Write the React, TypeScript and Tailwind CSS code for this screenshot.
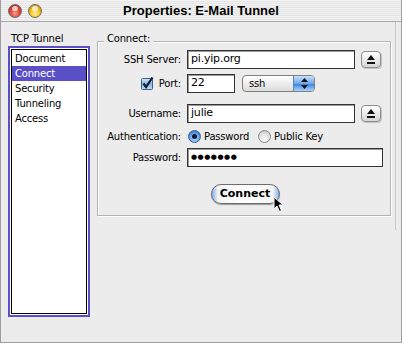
import React from "react";

const listItems = ["Document", "Connect", "Security", "Tunneling", "Access"];

function TrafficLight({ color }: { color: "red" | "yellow" }) {
  const bg =
    color === "red"
      ? "bg-[radial-gradient(circle_at_50%_70%,#ff9a8a_0%,#e0463a_45%,#a81c14_100%)]"
      : "bg-[radial-gradient(circle_at_50%_70%,#fff3a0_0%,#f7c21c_45%,#c57a06_100%)]";
  return (
    <div className={`relative h-[14px] w-[14px] rounded-full border border-[#6b6b6b] ${bg}`}>
      <div className="absolute left-[3px] top-[1px] h-[5px] w-[6px] rounded-full bg-white/70" />
    </div>
  );
}

function EjectButton() {
  return (
    <div className="flex h-[17px] w-[20px] items-center justify-center rounded-[4px] border border-[#8d8d8d] bg-gradient-to-b from-white to-[#d6d6d6] shadow-[1px_1px_0_#c4c4c4]">
      <svg width="8" height="9" viewBox="0 0 8 9">
        <path d="M4 0 L8 5 L0 5 Z" fill="#111" />
        <rect x="0" y="7" width="8" height="2" fill="#111" />
      </svg>
    </div>
  );
}

function Field({ value, width, dots }: { value: string; width: string; dots?: boolean }) {
  return (
    <div
      className={`flex h-[19px] items-center border border-[#333] bg-white pl-[3px] shadow-[inset_1px_1px_0_#9a9a9a] ${width} ${
        dots ? "text-[7px] tracking-[0.5px]" : "text-[11px] tracking-[-0.2px]"
      }`}
    >
      {value}
    </div>
  );
}

export default function App() {
  return (
    <div className="h-[344px] w-[402px] bg-white font-['DejaVu_Sans',sans-serif] text-[10px] tracking-[-0.2px] text-black">
      <div className="relative flex h-[343px] w-[402px] flex-col border-x border-b border-[#9d9d9d] bg-[#ececec]">
        {/* Title bar */}
        <div className="relative flex h-[22px] shrink-0 items-center justify-center border-b border-[#a6a6a6] bg-[repeating-linear-gradient(to_bottom,#f4f4f4_0px,#f4f4f4_1px,#e4e4e4_1px,#e4e4e4_2px)]">
          <div className="absolute left-[7px] top-[4px] flex gap-[6px]">
            <TrafficLight color="red" />
            <TrafficLight color="yellow" />
          </div>
          <span className="font-['Liberation_Sans',sans-serif] text-[13px] font-bold tracking-normal">
            Properties: E-Mail Tunnel
          </span>
        </div>

        <div className="absolute right-[5px] top-[22px] h-[208px] w-px bg-[#c9c9c9]" />

        {/* Body */}
        <div className="flex flex-1 gap-[7px] pl-[7px] pt-[9px]">
          {/* Left list */}
          <div className="flex w-[82px] flex-col">
            <div className="h-[15px] pl-[3px] leading-[15px]">TCP Tunnel</div>
            <div className="h-[271px] border-2 border-[#5a4fc7] bg-white p-px">
              <div className="h-full border border-black bg-white pt-[1px]">
                {listItems.map((item) => (
                  <div
                    key={item}
                    className={`h-[15px] pl-[3px] leading-[15px] ${
                      item === "Connect" ? "bg-[#5a4fc7] text-white" : ""
                    }`}
                  >
                    {item}
                  </div>
                ))}
              </div>
            </div>
          </div>

          {/* Connect group */}
          <div className="relative mt-[10px] h-[175px] w-[294px] border border-[#b3b3b3] shadow-[inset_1px_1px_0_#fff,1px_1px_0_#fff]">
            <div className="absolute left-[6px] top-[-10px] bg-[#ececec] px-[3px] leading-[14px]">
              Connect:
            </div>

            <div className="flex flex-col pt-[8px]">
              {/* SSH Server */}
              <div className="flex h-[19px] items-center">
                <div className="w-[89px] pr-[6px] text-right">SSH Server:</div>
                <Field value="pi.yip.org" width="w-[168px]" />
                <div className="ml-[6px]">
                  <EjectButton />
                </div>
              </div>

              {/* Port */}
              <div className="mt-[4px] flex h-[20px] items-center">
                <div className="flex w-[89px] items-center justify-end gap-[5px] pr-[6px]">
                  <svg width="13" height="13" viewBox="0 0 13 13">
                    <defs>
                      <linearGradient id="cb" x1="0" y1="0" x2="0" y2="1">
                        <stop offset="0" stopColor="#d6e6f7" />
                        <stop offset="0.5" stopColor="#8fb4de" />
                        <stop offset="1" stopColor="#c3dcf5" />
                      </linearGradient>
                    </defs>
                    <rect x="0.5" y="1.5" width="11" height="11" rx="1" fill="url(#cb)" stroke="#3f5f86" />
                    <path d="M2.5 6.5 L5 10 L11.5 0.5" fill="none" stroke="#0e1f3a" strokeWidth="2.2" />
                  </svg>
                  <span>Port:</span>
                </div>
                <Field value="22" width="w-[48px]" />
                <div className="ml-[7px] flex h-[17px] w-[73px] overflow-hidden rounded-[4px] border border-[#7f7f7f] bg-gradient-to-b from-white to-[#dcdcdc]">
                  <div className="flex flex-1 items-center pl-[6px] text-[10px]">ssh</div>
                  <div className="flex w-[21px] items-center justify-center border-l border-[#5b84b8] bg-[linear-gradient(to_bottom,#c9e0fa,#6ea7ea_50%,#3f86e0_55%,#a9d5fb)]">
                    <svg width="7" height="11" viewBox="0 0 7 11">
                      <path d="M3.5 0 L7 4 L0 4 Z" fill="#111" />
                      <path d="M3.5 11 L7 7 L0 7 Z" fill="#111" />
                    </svg>
                  </div>
                </div>
              </div>

              {/* Username */}
              <div className="mt-[11px] flex h-[19px] items-center">
                <div className="w-[89px] pr-[6px] text-right">Username:</div>
                <Field value="julie" width="w-[168px]" />
                <div className="ml-[6px]">
                  <EjectButton />
                </div>
              </div>

              {/* Authentication */}
              <div className="mt-[6px] flex h-[14px] items-center">
                <div className="w-[89px] pr-[6px] text-right">Authentication:</div>
                <div className="ml-px h-[13px] w-[13px] rounded-full border border-[#3c5f8f] bg-[radial-gradient(circle_at_50%_65%,#cfe6ff_0%,#5d9be6_55%,#2a5ea8_100%)] p-[3px]">
                  <div className="h-full w-full rounded-full bg-[#0c1a33]" />
                </div>
                <span className="ml-[3px]">Password</span>
                <div className="ml-[9px] h-[13px] w-[13px] rounded-full border border-[#8a8a8a] bg-[radial-gradient(circle_at_50%_70%,#ffffff_0%,#dcdcdc_60%,#b0b0b0_100%)]" />
                <span className="ml-[3px]">Public Key</span>
              </div>

              {/* Password */}
              <div className="mt-[5px] flex h-[19px] items-center">
                <div className="w-[89px] pr-[6px] text-right">Password:</div>
                <Field value="●●●●●●●" width="w-[196px]" dots />
              </div>

              {/* Connect button */}
              <div className="mt-[17px] flex justify-center pl-[2px]">
                <div className="relative flex h-[20px] w-[69px] items-center justify-center rounded-full border border-[#6d6d6d] bg-[linear-gradient(to_right,#7fb0ee_0px,#f4f4f4_6px,#ffffff_50%,#f4f4f4_calc(100%-6px),#7fb0ee_100%)] text-[11px] font-bold tracking-normal shadow-[0_1px_1px_#9a9a9a]">
                  Connect
                  <svg
                    className="absolute left-[61px] top-[11px]"
                    width="11"
                    height="17"
                    viewBox="0 0 11 17"
                  >
                    <path
                      d="M1 1 L1 13 L4 10 L6.5 15.5 L8.5 14.5 L6 9 L10 9 Z"
                      fill="#000"
                      stroke="#fff"
                      strokeWidth="1"
                    />
                  </svg>
                </div>
              </div>
            </div>
          </div>
        </div>
      </div>
    </div>
  );
}
